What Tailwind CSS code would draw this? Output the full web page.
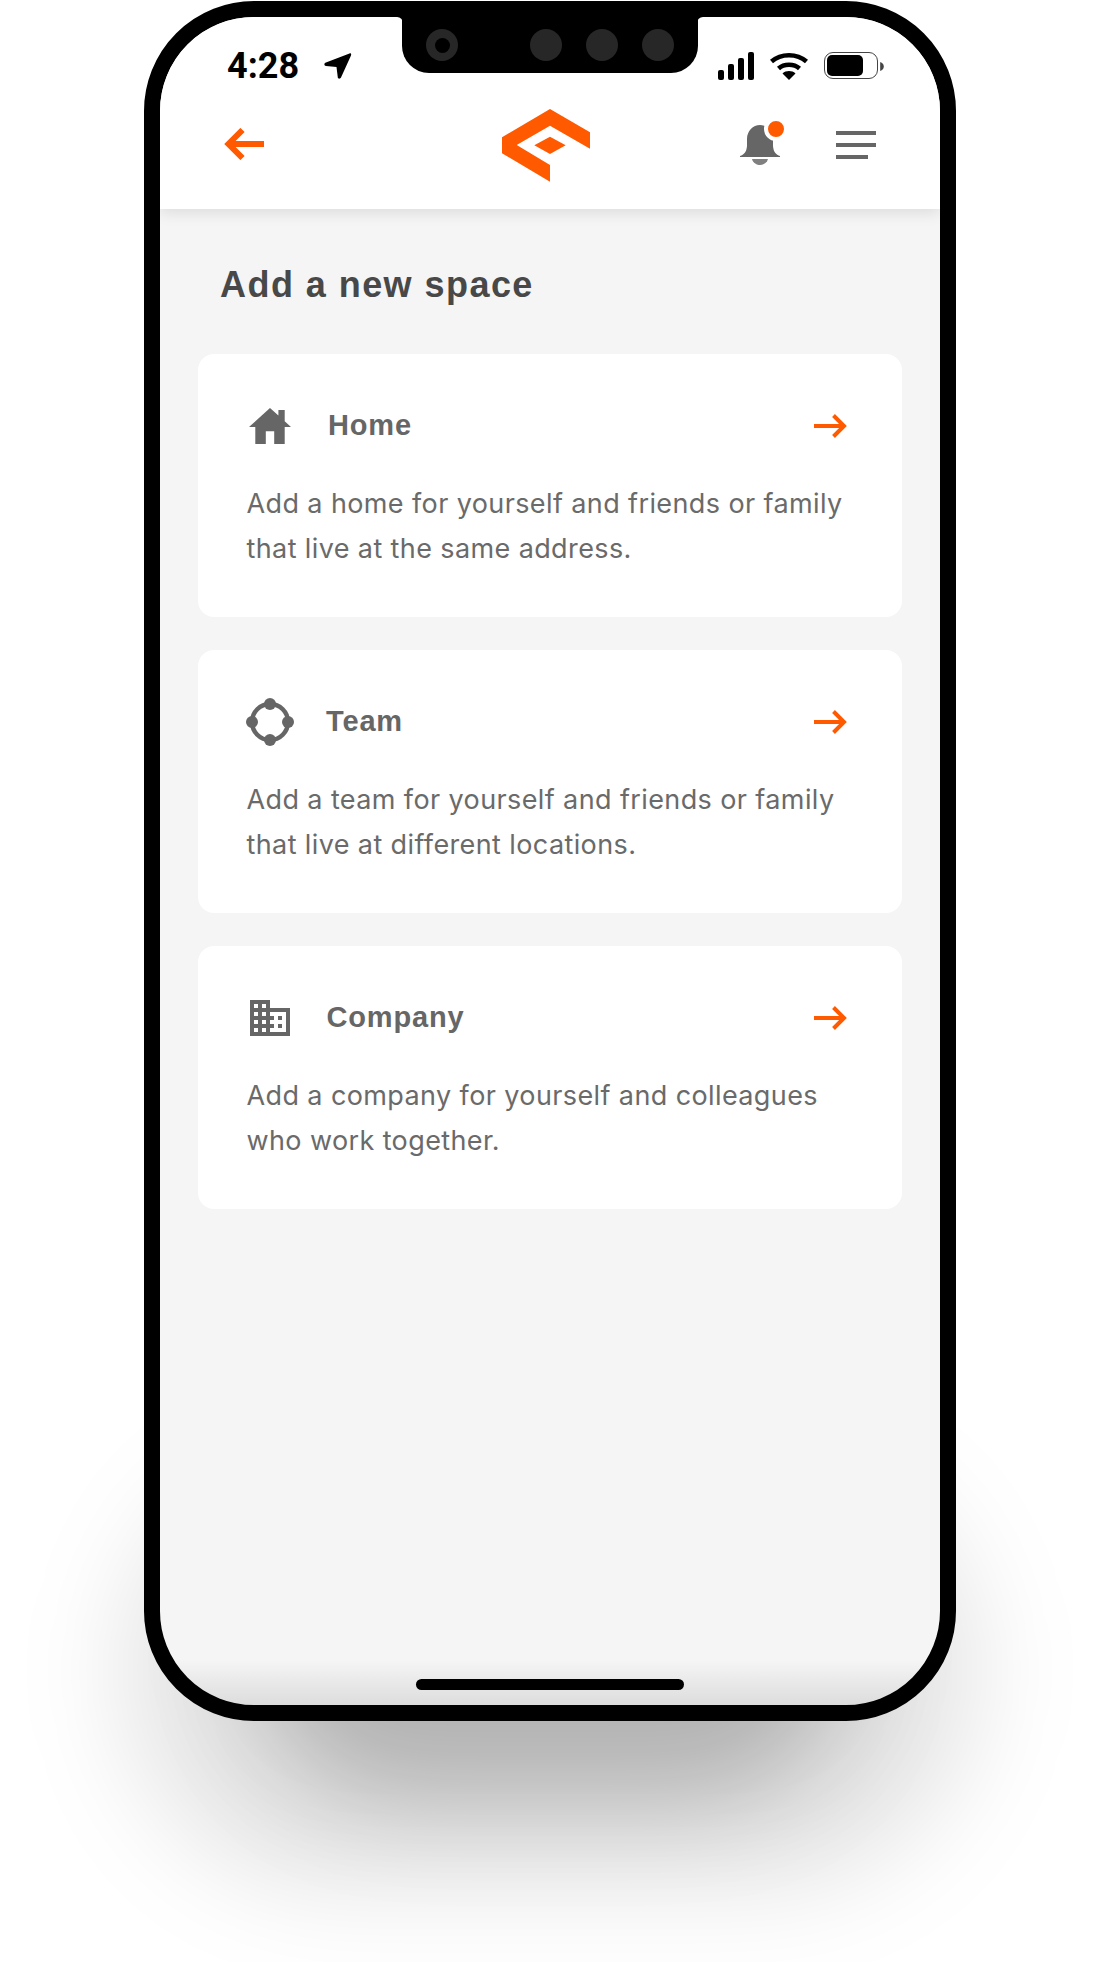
<!DOCTYPE html>
<html><head><meta charset="utf-8">
<script src="https://cdn.jsdelivr.net/npm/@tailwindcss/browser@4"></script>
</head>
<body class="bg-white">
<div class="relative w-[1100px] h-[1962px] overflow-hidden bg-white font-['Inter',sans-serif]">
  <!-- drop shadow -->
  <div class="absolute left-[120px] top-[1450px] w-[860px] h-[440px] rounded-full bg-black/10 blur-[50px]"></div>
  <div class="absolute left-[250px] top-[1480px] w-[600px] h-[320px] rounded-full bg-black/22 blur-[50px]"></div>
  <!-- phone -->
  <div class="absolute left-[144px] top-px w-[812px] h-[1720px] border-[16px] border-black bg-[#f5f5f5] overflow-hidden rounded-[110px]">
    <header class="relative h-[192px] bg-white shadow-[0_4px_14px_rgba(0,0,0,0.1)]">
      <!-- notch -->
      <div class="absolute left-[242px] top-0 w-[296px] h-[56px] bg-black rounded-b-[27px] flex items-center pl-[24px] gap-[24px]">
        <div class="w-[32px] h-[32px] rounded-full bg-[#272727] flex items-center justify-center"><div class="w-[15px] h-[15px] rounded-full bg-black"></div></div>
        <div class="ml-[48px] w-[32px] h-[32px] rounded-full bg-[#272727]"></div>
        <div class="w-[32px] h-[32px] rounded-full bg-[#272727]"></div>
        <div class="w-[32px] h-[32px] rounded-full bg-[#272727]"></div>
      </div>
      <svg class="absolute left-[237px] top-0" width="6" height="6" viewBox="0 0 6 6"><path d="M0 0H6V6A6 6 0 0 0 0 0Z" fill="#000"/></svg>
      <svg class="absolute left-[537px] top-0" width="6" height="6" viewBox="0 0 6 6"><path d="M0 0H6A6 6 0 0 0 0 6Z" fill="#000"/></svg>
      <!-- status -->
      <span class="absolute left-[67px] top-[29px] font-['Roboto',sans-serif] font-bold text-[36px] leading-[40px] text-black">4:28</span>
      <svg class="absolute left-[164px] top-[36px]" width="28" height="27" viewBox="0 0 28 27"><path d="M25.500.5C26.800 0 27.500 1 27 2.500L17 24.500C16.300 26 14 26 13.800 24.500L12.500 14 2 13C.2 12.800-.3 10.500 1.300 9.700Z" fill="#000"/></svg>
      <svg class="absolute left-[558px] top-[35px]" width="36" height="28" viewBox="0 0 36 28"><rect x="0" y="18" width="6" height="10" rx="2"/><rect x="10" y="12" width="6" height="16" rx="2"/><rect x="20" y="6" width="6" height="22" rx="2"/><rect x="30" y="0" width="6" height="28" rx="2"/></svg>
      <svg class="absolute left-[610px] top-[35px]" width="38" height="29" viewBox="0 0 38 29" fill="none"><path d="M1.500 9.500C11 1 27 1 36.500 9.500" stroke="#000" stroke-width="4.500"/><path d="M8.500 16.500c5.500-5 15.500-5 21 0" stroke="#000" stroke-width="4.500"/><path d="M12.500 21.500c3.500-3.200 9.500-3.200 13 0L19 28z" fill="#000"/></svg>
      <div class="absolute left-[664px] top-[35px] w-[54px] h-[27px] rounded-[9px] border-[1.5px] border-[#444] p-[2px]"><div class="w-[36px] h-full bg-black rounded-[5px]"></div></div>
      <svg class="absolute left-[720px] top-[45px]" width="4" height="9" viewBox="0 0 4 10"><path d="M0 0C2.500.8 4 2.800 4 5S2.500 9.200 0 10Z" fill="#444"/></svg>
      <!-- nav -->
      <svg class="absolute left-[64px] top-[111px]" width="40" height="32" viewBox="0 0 40 32" fill="none" stroke="#ff5a00" stroke-width="6"><path d="M40 16H4.500"/><path d="M18.500 2 4.500 16 18.500 30"/></svg>
      <svg class="absolute left-[342px] top-[92px]" width="88" height="73" viewBox="0 0 88 73"><path d="M48 0 88 23.300V39.700L48 16.700 14.700 36 48 56V72.700L0 44.300V28.300Z" fill="#ff5a00"/><path d="M48 27.700 63.700 36.300 48 45 32.300 36.300Z" fill="#ff5a00"/></svg>
      <svg class="absolute left-[580px] top-[108px]" width="40" height="40" viewBox="0 0 40 40"><path d="M0 31C4 29.500 6.500 27 7 21V14C7 6 13 0 20 0 27 0 33 6 33 14V21C33.500 27 36 29.500 40 31V32H0Z" fill="#666"/><path d="M12 34H28C27 38 23 40 20 40S13 38 12 34Z" fill="#808080"/></svg>
      <div class="absolute left-[604px] top-[100px] w-[24px] h-[24px] rounded-full border-4 border-white bg-[#ff5a00]"></div>
      <div class="absolute left-[676px] top-[114px] w-[40px] flex flex-col gap-[8px]">
        <div class="h-1 bg-[#666]"></div><div class="h-1 bg-[#666]"></div><div class="h-1 w-[32px] bg-[#666]"></div>
      </div>
    </header>
    <main class="px-[38px]">
      <h1 class="mt-[56px] ml-[22px] h-[40px] font-['Liberation_Sans',sans-serif] font-bold text-[36px] leading-[40px] tracking-[1.45px] text-[#484848]">Add a new space</h1>
      <section class="mt-[49px] flex flex-col gap-[33px]">
        <article class="h-[263px] rounded-[16px] bg-white pl-[48.5px] pr-[55px] pt-[50px]">
          <div class="flex items-center h-[44px]">
            <svg class="ml-[2px]" width="42" height="36" viewBox="2 3 20 17" preserveAspectRatio="none"><path d="M19 9.300V4h-3v2.600L12 3 2 12h3v8h5v-6h4v6h5v-8h3l-3-2.700z" fill="#666"/></svg>
            <h2 class="ml-[37.500px] font-['Liberation_Sans',sans-serif] font-bold text-[29px] tracking-[0.85px] text-[#666] flex-1">Home</h2>
            <svg width="33" height="24" viewBox="0 0 33 24" fill="none" stroke="#ff5a00" stroke-width="4"><path d="M0 12H30"/><path d="M19.500 1.500 30 12 19.500 22.500"/></svg>
          </div>
          <p class="mt-[34px] text-[27px] leading-[44.5px] tracking-[0.39px] text-[#6a6a6a]">Add a home for yourself and friends or family that live at the same address.</p>
        </article>
        <article class="h-[263px] rounded-[16px] bg-white pl-[48.5px] pr-[55px] pt-[50px]">
          <div class="flex items-center h-[44px]">
            <svg class="-ml-px" width="48" height="48" viewBox="0 0 48 48" fill="#666"><circle cx="24" cy="24" r="18" fill="none" stroke="#666" stroke-width="4.500"/><circle cx="24" cy="6" r="6"/><circle cx="24" cy="42" r="6"/><circle cx="6" cy="24" r="6"/><circle cx="42" cy="24" r="6"/></svg>
            <h2 class="ml-[32.500px] font-['Liberation_Sans',sans-serif] font-bold text-[29px] tracking-[0.85px] text-[#666] flex-1">Team</h2>
            <svg width="33" height="24" viewBox="0 0 33 24" fill="none" stroke="#ff5a00" stroke-width="4"><path d="M0 12H30"/><path d="M19.500 1.500 30 12 19.500 22.500"/></svg>
          </div>
          <p class="mt-[34px] text-[27px] leading-[44.5px] tracking-[0.39px] text-[#6a6a6a]">Add a team for yourself and friends or family that live at different locations.</p>
        </article>
        <article class="h-[263px] rounded-[16px] bg-white pl-[48.5px] pr-[55px] pt-[50px]">
          <div class="flex items-center h-[44px]">
            <svg class="ml-[3px]" width="40" height="36" viewBox="2 3 20 18"><path d="M12 7V3H2v18h20V7H12zM6 19H4v-2h2v2zm0-4H4v-2h2v2zm0-4H4V9h2v2zm0-4H4V5h2v2zm4 12H8v-2h2v2zm0-4H8v-2h2v2zm0-4H8V9h2v2zm0-4H8V5h2v2zm10 12h-8v-2h2v-2h-2v-2h2v-2h-2V9h8v10zm-2-8h-2v2h2v-2zm0 4h-2v2h2v-2z" fill="#666"/></svg>
            <h2 class="ml-[37px] font-['Liberation_Sans',sans-serif] font-bold text-[29px] tracking-[0.85px] text-[#666] flex-1">Company</h2>
            <svg width="33" height="24" viewBox="0 0 33 24" fill="none" stroke="#ff5a00" stroke-width="4"><path d="M0 12H30"/><path d="M19.500 1.500 30 12 19.500 22.500"/></svg>
          </div>
          <p class="mt-[34px] text-[27px] leading-[44.5px] tracking-[0.39px] text-[#6a6a6a]">Add a company for yourself and colleagues who work together.</p>
        </article>
      </section>
    </main>
    <div class="absolute bottom-0 left-0 right-0 h-[45px] bg-gradient-to-b from-transparent to-black/10"></div>
    <div class="absolute left-[256px] top-[1662px] w-[268px] h-[11px] rounded-full bg-black"></div>
  </div>
</div>
</body></html>
